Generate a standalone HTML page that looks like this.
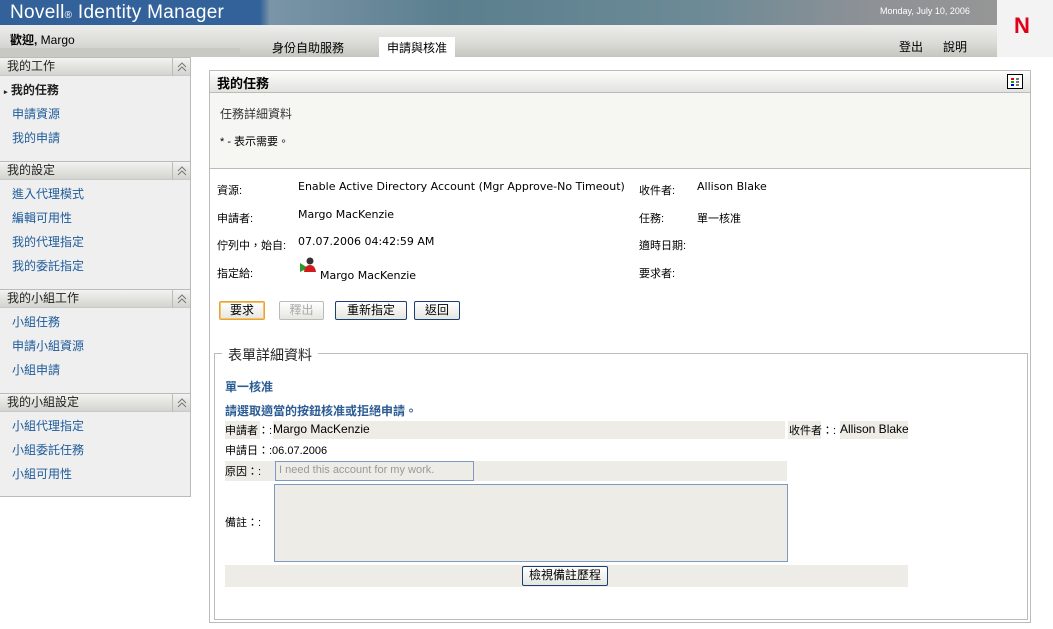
<!DOCTYPE html>
<html><head><meta charset="utf-8"><style>
*{margin:0;padding:0;box-sizing:border-box}
body{width:1053px;height:629px;overflow:hidden;background:#fff;font-family:"Liberation Sans","Noto Sans CJK TC",sans-serif;font-size:12px;color:#000;position:relative}
.a{position:absolute}
.top{left:0;top:0;width:1000px;height:25px;background:linear-gradient(90deg,#33629a 0,#33629a 260px,#7a94a8 270px,#5b7f8e 450px,#6c8a96 700px,#8e9196 870px,#969696 1000px)}
.logo{left:10px;top:2px;color:#fff;font-size:19px;letter-spacing:0.3px}
.date{left:880px;top:6px;color:#fff;font-size:9px}
.bar{left:0;top:25px;width:997px;height:32px;background:linear-gradient(#eeeeec,#d9d9d5 60%,#c6c6c0)}
.n{left:997px;top:0;width:56px;height:57px;background:#f3f3f3}
.side{left:0;top:57px;width:191px;height:440px;background:#efefef;border-right:1px solid #bbb;border-bottom:1px solid #bbb}
.sh{position:absolute;left:0;width:190px;height:19px;background:linear-gradient(#f3f3f1,#d3d3cf);border-top:1px solid #bbb;border-bottom:1px solid #c8c8c8;font-size:12px;padding:0 0 0 7px;line-height:17px;color:#222}
.sh i{position:absolute;right:0;top:0;width:18px;height:18px;border-left:1px solid #bbb}
.si{position:absolute;left:12px;color:#1e5b9a;font-size:12px}
.panel{left:209px;top:70px;width:822px;height:553px;border:1px solid #bbb}
.ph{left:0;top:0;width:820px;height:22px;background:linear-gradient(#fdfdfd,#e2e2de);border-bottom:1px solid #bbb;font-weight:bold;font-size:13px;padding:2px 0 0 7px}
.gray{left:0;top:22px;width:820px;height:76px;background:#f6f6f3;border-bottom:1px solid #bbb}
.lb{position:absolute;font-size:11px}
.v{position:absolute;font-size:11px;font-family:"DejaVu Sans","Noto Sans CJK TC",sans-serif;margin-top:-2px}
.btn{position:absolute;height:19px;border:1px solid #1c3f73;border-radius:2px;background:linear-gradient(#fff,#e6e6e0);font-size:12px;text-align:center;line-height:16px}
.row{position:absolute;background:#eeece7}
</style></head><body>
<div class="a top"></div>
<div class="a logo">Novell<span style="font-size:10px">®</span> Identity Manager</div>
<div class="a date">Monday, July 10, 2006</div>
<div class="a bar"></div>
<div class="a" style="left:0;top:48px;width:240px;height:9px;background:#c9c9c4"></div>
<div class="a" style="left:10px;top:31px;font-size:12px;font-weight:bold">歡迎, <span style="font-weight:normal">Margo</span></div>
<div class="a" style="left:272px;top:39px;font-size:12px">身份自助服務</div>
<div class="a" style="left:379px;top:37px;width:76px;height:20px;background:#fff;font-size:12px;padding:2px 0 0 8px">申請與核准</div>
<div class="a" style="left:899px;top:38px;font-size:12px">登出</div>
<div class="a" style="left:943px;top:38px;font-size:12px">說明</div>
<div class="a n"></div>
<div class="a" style="left:1014px;top:13px;color:#e1001a;font-weight:bold;font-size:22px;font-family:'Liberation Sans',sans-serif">N</div>

<div class="a side">
<div class="sh" style="top:0">我的工作<i><svg width="18" height="18"><path d="M5 9 L9 5 L13 9 M5 13 L9 9 L13 13" fill="none" stroke="#777" stroke-width="1"/></svg></i></div>
<div class="si" style="top:24px;left:4px;color:#222;font-weight:bold"><span style="font-size:7px">▸</span> 我的任務</div>
<div class="si" style="top:48px">申請資源</div>
<div class="si" style="top:72px">我的申請</div>
<div class="sh" style="top:104px">我的設定<i><svg width="18" height="18"><path d="M5 9 L9 5 L13 9 M5 13 L9 9 L13 13" fill="none" stroke="#777" stroke-width="1"/></svg></i></div>
<div class="si" style="top:128px">進入代理模式</div>
<div class="si" style="top:152px">編輯可用性</div>
<div class="si" style="top:176px">我的代理指定</div>
<div class="si" style="top:200px">我的委託指定</div>
<div class="sh" style="top:232px">我的小組工作<i><svg width="18" height="18"><path d="M5 9 L9 5 L13 9 M5 13 L9 9 L13 13" fill="none" stroke="#777" stroke-width="1"/></svg></i></div>
<div class="si" style="top:256px">小組任務</div>
<div class="si" style="top:280px">申請小組資源</div>
<div class="si" style="top:304px">小組申請</div>
<div class="sh" style="top:336px">我的小組設定<i><svg width="18" height="18"><path d="M5 9 L9 5 L13 9 M5 13 L9 9 L13 13" fill="none" stroke="#777" stroke-width="1"/></svg></i></div>
<div class="si" style="top:360px">小組代理指定</div>
<div class="si" style="top:384px">小組委託任務</div>
<div class="si" style="top:408px">小組可用性</div>
</div>

<div class="a panel">
<div class="a ph">我的任務</div>
<div class="a" style="left:797px;top:3px;width:16px;height:15px;border:1px solid #000;background:#fff"><svg width="14" height="13"><rect x="3" y="3" width="3" height="2" fill="#e00"/><rect x="3" y="6" width="3" height="2" fill="#0a0"/><rect x="3" y="9" width="3" height="2" fill="#00d"/><rect x="8" y="3" width="3" height="2" fill="#777"/><rect x="8" y="6" width="3" height="2" fill="#777"/><rect x="8" y="9" width="3" height="2" fill="#777"/></svg></div>
<div class="a gray"></div>
<div class="a" style="left:10px;top:34px;font-size:12px;color:#333">任務詳細資料</div>
<div class="a" style="left:10px;top:62px;font-size:11px">* - 表示需要。</div>

<div class="lb" style="left:7px;top:111px">資源:</div><div class="v" style="left:88px;top:111px">Enable Active Directory Account (Mgr Approve-No Timeout)</div>
<div class="lb" style="left:7px;top:139px">申請者:</div><div class="v" style="left:88px;top:139px">Margo MacKenzie</div>
<div class="lb" style="left:7px;top:166px">佇列中，始自:</div><div class="v" style="left:88px;top:166px">07.07.2006 04:42:59 AM</div>
<div class="lb" style="left:7px;top:194px">指定給:</div>
<svg class="a" style="left:89px;top:186px" width="18" height="16"><path d="M1 6 L1 15 L9 11 Z" fill="#2a9a2a"/><circle cx="11" cy="4" r="3.5" fill="#333"/><path d="M5 15 Q6 8 11 8 Q16 8 17 15 Z" fill="#d21a1a"/></svg>
<div class="v" style="left:110px;top:200px">Margo MacKenzie</div>
<div class="lb" style="left:429px;top:111px">收件者:</div><div class="v" style="left:487px;top:111px">Allison Blake</div>
<div class="lb" style="left:429px;top:139px">任務:</div><div class="v" style="left:487px;top:139px;margin-top:0">單一核准</div>
<div class="lb" style="left:429px;top:166px">適時日期:</div>
<div class="lb" style="left:429px;top:194px">要求者:</div>

<div class="btn" style="left:9px;top:230px;width:46px;border-color:#e6a33a;box-shadow:inset 0 0 0 1px #f5c26a">要求</div>
<div class="btn" style="left:69px;top:230px;width:45px;border-color:#bbb;color:#aaa">釋出</div>
<div class="btn" style="left:125px;top:230px;width:72px">重新指定</div>
<div class="btn" style="left:204px;top:230px;width:46px">返回</div>

<div class="a" style="left:4px;top:282px;width:814px;height:267px;border:1px solid #bbb"></div>
<div class="a" style="left:12px;top:274px;background:#fff;padding:0 6px;font-size:14px;color:#222">表單詳細資料</div>
<div class="a" style="left:15px;top:307px;color:#2c5c94;font-weight:bold;font-size:12px">單一核准</div>
<div class="a" style="left:15px;top:331px;color:#2c5c94;font-weight:bold;font-size:12px">請選取適當的按鈕核准或拒絕申請。</div>
<div class="row" style="left:15px;top:350px;width:35px;height:18px"></div>
<div class="row" style="left:63px;top:350px;width:512px;height:18px"></div>
<div class="row" style="left:578px;top:350px;width:33px;height:18px"></div>
<div class="row" style="left:630px;top:350px;width:68px;height:18px"></div>
<div class="lb" style="left:15px;top:351px">申請者：:</div><div class="v" style="left:63px;top:353px;font-family:'Liberation Sans',sans-serif;font-size:12px">Margo MacKenzie</div>
<div class="lb" style="left:579px;top:351px">收件者：:</div><div class="v" style="left:630px;top:353px;font-family:'Liberation Sans',sans-serif;font-size:12px">Allison Blake</div>
<div class="lb" style="left:15px;top:371px">申請日：:06.07.2006</div>
<div class="row" style="left:15px;top:390px;width:562px;height:20px"></div>
<div class="lb" style="left:15px;top:392px">原因：:</div>
<div class="a" style="left:65px;top:390px;width:199px;height:20px;border:1px solid #7d9ac0;background:#eeece7;color:#999;font-size:11px;padding:2px 3px">I need this account for my work.</div>
<div class="a" style="left:64px;top:413px;width:514px;height:78px;border:1px solid #7d9ac0;background:#eeece7"></div>
<div class="lb" style="left:15px;top:443px">備註：:</div>
<div class="row" style="left:15px;top:494px;width:683px;height:22px"></div>
<div class="btn" style="left:312px;top:495px;width:86px;height:20px">檢視備註歷程</div>
</div>
</body></html>
